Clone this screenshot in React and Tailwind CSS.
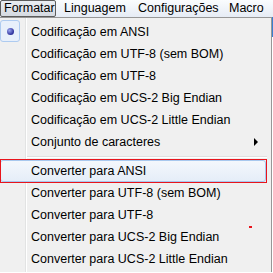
import React from "react";

const grupo1 = [
	"Codificação em ANSI",
	"Codificação em UTF-8 (sem BOM)",
	"Codificação em UTF-8",
	"Codificação em UCS-2 Big Endian",
	"Codificação em UCS-2 Little Endian",
];

const grupo2 = [
	"Converter para UTF-8 (sem BOM)",
	"Converter para UTF-8",
	"Converter para UCS-2 Big Endian",
	"Converter para UCS-2 Little Endian",
];

function Item({ label, checked, arrow }) {
	return (
		<div className="relative flex h-[22px] items-center pt-[1px]">
			{checked && (
				<div className="absolute left-0 top-[-1px] flex h-[22px] w-[20px] items-center justify-center rounded-[3px] border border-[#aecbf0] bg-[#e8f0fb]">
					<div className="h-[7px] w-[7px] rounded-full bg-[radial-gradient(circle_at_35%_35%,#9aa6f0,#2c2f9a_70%)]" />
				</div>
			)}
			<span className="pl-[31px]">{label}</span>
			{arrow && (
				<span className="absolute left-[254px] top-[7px] h-0 w-0 border-y-[4px] border-l-[4px] border-y-transparent border-l-black" />
			)}
		</div>
	);
}

export default function App() {
	return (
		<div
			className="relative h-[273px] w-[273px] overflow-hidden bg-white text-[12.5px] text-black"
			style={{ fontFamily: '"Liberation Sans", Arial, sans-serif' }}
		>
			{/* barra de menus */}
			<div className="flex h-[17px] items-center bg-gradient-to-b from-[#fafcfe] to-[#e6ecf5] leading-none">
				<div className="flex h-[17px] w-[56px] items-center rounded-[2px] border border-[#5c5c5c] bg-gradient-to-b from-[#e9edf2] to-[#d5dae1] pl-[3px]">
					Formatar
				</div>
				<span className="ml-[8px] w-[74px]">Linguagem</span>
				<span className="w-[91px]">Configurações</span>
				<span>Macro</span>
			</div>

			{/* menu suspenso */}
			<div className="relative w-[272px] border-r border-t border-[#979797] bg-[#f0f0f0] pt-[3px] pb-[2px] leading-none">
				<div className="absolute bottom-0 left-[25px] top-0 w-[2px] border-l border-[#e2e3e3] bg-white" />
				{grupo1.map((t, i) => (
					<Item key={t} label={t} checked={i === 0} />
				))}
				<Item label="Conjunto de caracteres" arrow />
				<div className="relative flex h-[7px] items-center pl-[27px] pr-[4px]">
					<div className="h-[2px] w-full border-t border-[#e0e0e0] bg-white" />
				</div>
				<div className="relative h-[22px]">
					<div className="absolute left-0 top-0 flex h-[22px] w-[266px] items-center rounded-[3px] border border-[#a8c8ee] bg-gradient-to-b from-[#f4f7fc] to-[#e5edf8] pt-[1px]">
						<span className="pl-[30px]">Converter para ANSI</span>
					</div>
					<div className="absolute left-0 top-[-1px] h-[24px] w-[267px] border border-[#e8141c]" />
				</div>
				{grupo2.map((t) => (
					<Item key={t} label={t} />
				))}
				<div className="absolute left-[249px] top-[208px] h-[2px] w-[3px] bg-[#e8141c]" />
			</div>
			<div className="absolute left-[272px] top-[17px] h-[20px] w-[1px] bg-[#3a7fd0]" />
		</div>
	);
}
